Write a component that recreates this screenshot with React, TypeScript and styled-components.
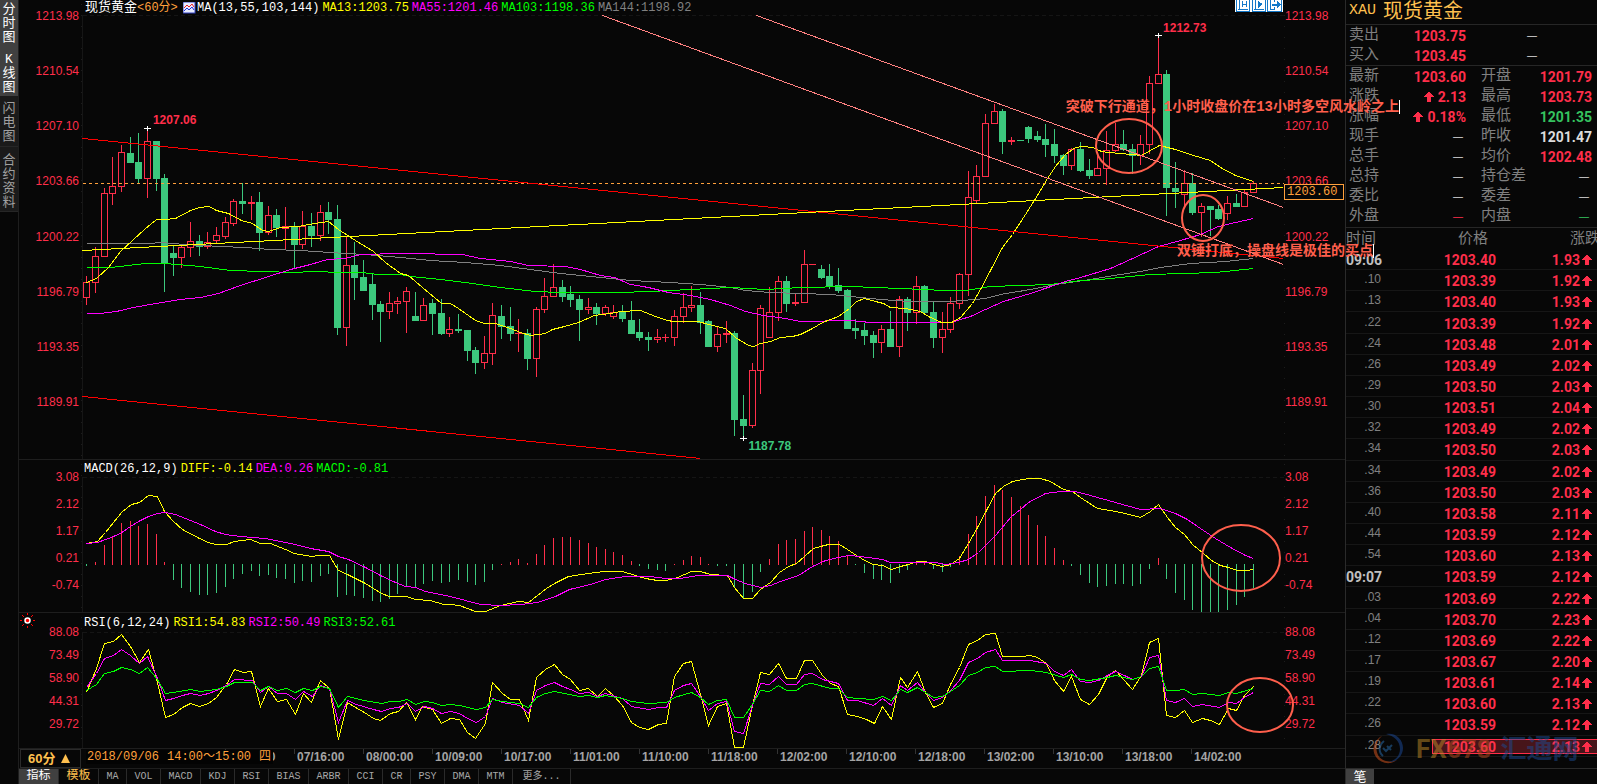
import React from "react";
import styled, { createGlobalStyle, css } from "styled-components";

const RED = "#ff2e4a";
const GREEN = "#3cc87d";
const GOLD = "#ffc04f";
const ORANGE = "#ffa03c";
const YELLOW = "#ffff00";
const MAGENTA = "#ff00ff";
const LIME = "#00ff00";
const GREY = "#808080";
const NOTE = "#ff5f4c";
const LINE = "#1e1e1e";

const SANS = `"Liberation Sans", "Noto Sans CJK SC", sans-serif`;
const MONO = `"Liberation Mono", "Noto Sans CJK SC", monospace`;
const NUM = `Roboto, "Noto Sans CJK SC", sans-serif`;

const GlobalStyle = createGlobalStyle`
  *, *::before, *::after { box-sizing: border-box; }
  body { margin: 0; background: #070707; overflow: hidden; }
  button { border: 0; margin: 0; padding: 0; background: none; font: inherit; color: inherit; cursor: pointer; }
  dl, dt, dd, h1, h2, p { margin: 0; font-weight: inherit; font-size: inherit; }
`;

/* ---------- data ---------- */

const PLOT_X = 82;
const PLOT_W = 1202;

type Candle = [up: 0 | 1, top: number, bottom: number, high: number, low: number];

const CANDLES: Candle[] = [
  [1, 282, 298, 276, 305], [1, 256, 283, 247, 293], [1, 193, 257, 188, 257], [1, 186, 194, 157, 205],
  [1, 152, 187, 145, 192], [0, 153, 163, 137, 163], [0, 162, 179, 133, 183], [1, 141, 179, 128, 198],
  [0, 141, 179, 141, 191], [0, 178, 264, 174, 292], [0, 253, 258, 246, 276], [1, 247, 258, 245, 268],
  [1, 241, 248, 222, 257], [0, 241, 247, 235, 256], [1, 242, 247, 232, 249], [1, 235, 241, 227, 244],
  [1, 222, 237, 217, 239], [1, 201, 224, 199, 226], [0, 201, 204, 183, 214], [1, 202, 204, 196, 220],
  [0, 202, 233, 192, 251], [1, 215, 233, 206, 235], [0, 215, 228, 209, 237], [1, 226, 229, 207, 249],
  [0, 227, 245, 222, 268], [1, 226, 245, 211, 249], [0, 226, 236, 213, 247], [1, 212, 236, 205, 241],
  [0, 212, 220, 202, 234], [0, 219, 328, 205, 335], [1, 265, 328, 237, 346], [0, 265, 278, 242, 300],
  [0, 277, 291, 260, 291], [0, 284, 305, 274, 320], [0, 304, 312, 301, 342], [1, 303, 312, 292, 319],
  [1, 301, 304, 297, 314], [1, 291, 302, 287, 333], [0, 316, 321, 292, 321], [1, 305, 321, 298, 321],
  [0, 303, 314, 299, 335], [0, 313, 334, 299, 335], [1, 329, 334, 317, 337], [0, 329, 331, 314, 333],
  [0, 330, 351, 330, 361], [0, 350, 363, 347, 374], [1, 353, 363, 336, 369], [1, 315, 354, 303, 365],
  [0, 316, 327, 305, 339], [0, 326, 334, 307, 341], [1, 333, 334, 319, 352], [0, 333, 359, 329, 370],
  [1, 309, 359, 307, 377], [1, 296, 310, 278, 313], [1, 287, 297, 264, 297], [0, 287, 297, 280, 302],
  [0, 294, 300, 286, 307], [0, 299, 310, 295, 341], [1, 307, 310, 298, 314], [0, 307, 314, 303, 325],
  [1, 307, 314, 305, 316], [1, 312, 317, 305, 319], [0, 311, 319, 305, 322], [0, 320, 334, 301, 334],
  [0, 332, 338, 319, 341], [0, 337, 340, 332, 351], [1, 337, 340, 329, 343], [1, 337, 338, 334, 342],
  [1, 316, 338, 310, 346], [1, 307, 317, 293, 323], [1, 305, 308, 286, 312], [0, 305, 323, 292, 334],
  [0, 321, 347, 320, 347], [1, 334, 347, 327, 352], [1, 333, 335, 321, 343], [0, 333, 420, 331, 436],
  [0, 419, 426, 395, 438], [1, 370, 426, 363, 428], [1, 308, 371, 305, 394], [1, 312, 338, 287, 338],
  [1, 281, 313, 276, 321], [0, 281, 304, 276, 312], [1, 302, 304, 294, 306], [1, 264, 303, 250, 303],
  [1, 264, 265, 264, 265], [0, 269, 278, 265, 279], [0, 276, 287, 264, 289], [0, 285, 291, 268, 293],
  [0, 290, 329, 289, 329], [0, 328, 331, 319, 339], [0, 330, 336, 323, 345], [0, 335, 343, 331, 358],
  [1, 329, 343, 325, 353], [0, 329, 347, 311, 347], [1, 299, 347, 296, 357], [0, 299, 313, 297, 331],
  [1, 286, 313, 276, 324], [0, 286, 313, 285, 313], [0, 312, 338, 301, 348], [1, 329, 338, 312, 353],
  [1, 303, 330, 297, 333], [1, 274, 304, 273, 309], [1, 197, 275, 171, 296], [1, 176, 201, 165, 203],
  [1, 123, 177, 114, 177], [1, 111, 124, 104, 124], [0, 111, 142, 109, 154], [1, 140, 142, 137, 145],
  [0, 140, 141, 140, 141], [0, 127, 139, 126, 143], [0, 136, 140, 131, 142], [0, 139, 145, 124, 157],
  [0, 144, 156, 129, 163], [0, 155, 166, 154, 175], [1, 149, 166, 148, 170], [0, 149, 171, 142, 172],
  [0, 170, 176, 159, 179], [1, 168, 176, 153, 176], [1, 150, 169, 131, 185], [1, 144, 151, 123, 152],
  [0, 144, 150, 130, 151], [0, 149, 156, 144, 174], [1, 144, 156, 135, 165], [1, 83, 145, 76, 154],
  [1, 74, 84, 35, 84], [0, 74, 188, 70, 216], [0, 188, 192, 162, 208], [1, 183, 195, 170, 208],
  [0, 183, 213, 173, 215], [1, 206, 213, 203, 237], [0, 206, 210, 206, 236], [0, 209, 219, 205, 220],
  [1, 203, 214, 196, 220], [0, 203, 207, 194, 207], [1, 192, 207, 190, 207], [1, 183, 193, 181, 193],
];

const MACD_BARS = [
  566, 562, 545, 536, 523, 521, 526, 524, 534, 562, 580, 588, 592, 595, 595, 593, 587, 579, 574, 571,
  576, 575, 578, 579, 583, 581, 582, 576, 574, 597, 595, 596, 598, 601, 602, 599, 594, 587, 587, 584,
  581, 583, 582, 580, 582, 585, 582, 570, 564, 562, 559, 563, 554, 545, 538, 537, 537, 540, 543, 547,
  549, 552, 555, 561, 566, 569, 570, 571, 564, 560, 556, 557, 564, 566, 566, 587, 598, 592, 572, 559,
  544, 540, 539, 531, 527, 530, 536, 541, 555, 565, 573, 579, 580, 583, 573, 570, 562, 563, 569, 572,
  567, 556, 534, 516, 496, 485, 490, 497, 506, 515, 525, 536, 548, 560, 566, 575, 583, 587, 586, 584,
  584, 586, 584, 569, 558, 579, 593, 600, 610, 612, 612, 612, 610, 605, 597, 588,
];

const MA13 =
  "86,282 96,278 108,267 120,251 132,240 144,229 156,219 164,219 175,218 190,210 199,207 209,206 216,210 228,213 241,220 252,223 262,230 268,231 280,227 298,226 314,223 328,221 338,229 355,240 373,251 385,262 400,273 408,275 422,287 441,303 450,303 458,308 475,320 484,323 495,323 510,328 520,332 530,335 545,333 552,329 564,326 578,322 594,315 610,313 620,311 640,310 655,316 667,320 673,321 698,321 708,324 725,328 735,337 748,345 753,346 760,343 770,341 780,337 792,336 800,334 812,328 822,322 838,316 849,308 856,301 864,298 875,301 883,303 890,307 905,308 920,311 928,316 941,322 951,322 960,317 972,303 980,289 990,270 1002,247 1012,234 1025,214 1037,195 1047,178 1055,166 1065,154 1075,147 1082,146 1092,147 1101,151 1108,152 1120,153 1131,154 1141,155 1150,150 1159,145 1175,149 1193,155 1210,160 1220,167 1235,175 1253,181";
const MA55 =
  "86,313 100,313 116,311 133,307 155,303 180,299 200,297 218,293 240,285 265,277 290,269 310,264 327,259 345,258 360,254 375,254 385,253 400,253 428,253 440,254 462,254 480,258 510,261 528,265 565,266 580,269 600,275 614,277 630,284 648,287 668,292 690,295 710,299 730,305 745,311 763,315 785,318 800,321 850,320 870,322 950,322 970,316 985,309 1003,301 1030,293 1065,281 1080,277 1110,268 1130,259 1158,246 1180,240 1200,234 1218,226 1235,222 1253,218";
const MA103 =
  "86,267 110,267 145,263 165,263 200,266 230,270 262,271 295,272 310,271 345,272 362,272 377,274 400,274 410,276 440,279 465,282 500,287 535,291 560,292 618,292 650,291 690,289 730,287 748,288 765,289 800,287 850,286 900,288 945,290 965,290 990,286 1050,284 1080,280 1100,279 1150,274 1215,272 1253,268";
const MA144 =
  "86,243 150,243 160,242 185,244 220,246 245,247 270,249 300,250 345,253 365,254 400,257 430,260 465,262 500,265 530,269 560,273 600,277 630,280 670,282 700,284 730,287 745,290 770,292 800,293 830,294 850,296 880,299 910,301 950,301 985,298 1000,294 1030,289 1055,284 1090,279 1120,274 1140,271 1160,267 1190,263 1225,261 1253,258";
const DIFF =
  "86,543 97,541 105,532 113,522 122,511 131,504 139,502 148,495 157,496 164,511 173,521 182,529 199,538 208,542 215,544 226,544 234,541 250,539 260,543 270,543 285,549 294,553 311,556 319,555 329,555 338,570 347,574 365,583 381,593 389,596 406,596 415,599 430,600 443,604 450,604 459,605 475,611 485,611 500,605 518,601 528,602 537,595 546,588 554,583 568,576 588,573 603,571 622,571 635,575 645,578 657,580 666,580 677,577 691,571 700,571 710,574 727,575 734,587 743,598 752,598 760,589 770,582 779,572 788,566 796,563 804,556 813,548 820,546 828,544 839,544 847,549 856,555 866,561 873,564 882,565 891,569 900,566 908,564 917,561 925,561 933,564 942,566 950,564 959,558 968,543 977,527 986,510 995,493 1003,486 1012,481 1022,479 1030,478 1040,478 1050,481 1063,489 1072,491 1080,497 1097,508 1110,510 1125,513 1140,517 1150,511 1158,504 1167,517 1175,527 1184,534 1193,545 1202,552 1211,560 1220,565 1228,567 1237,570 1246,570 1253,569";
const DEA =
  "86,543 97,542 108,538 120,533 130,526 140,520 148,516 157,513 165,512 175,514 185,518 200,524 215,531 225,534 240,536 265,538 280,541 295,544 310,548 328,551 338,556 348,559 365,567 380,575 395,582 405,586 415,587 425,591 440,594 450,596 465,600 480,604 500,605 520,604 537,602 555,596 569,589 590,584 605,579 625,576 650,576 665,578 680,578 697,575 727,575 735,579 745,583 760,587 770,585 780,581 798,575 812,566 825,560 838,557 848,555 860,556 882,559 890,562 900,562 935,562 945,564 958,562 968,559 978,552 995,535 1011,516 1020,509 1028,502 1045,493 1060,491 1075,491 1090,495 1115,502 1140,509 1160,508 1175,513 1187,519 1200,528 1215,538 1230,547 1245,555 1253,558";
const RSI1 =
  "86,692 96,668 104,643 113,641 121,634 130,646 139,662 148,649 157,682 165,717 173,714 182,707 190,703 199,706 208,703 216,697 226,684 234,669 243,672 251,671 260,706 268,688 277,701 286,699 295,714 303,693 311,702 320,680 329,688 338,739 347,702 355,707 364,712 373,718 380,720 390,713 398,711 406,702 415,719 422,706 432,709 441,723 450,718 459,719 467,732 475,738 485,723 492,682 502,693 510,699 519,699 528,720 536,677 545,669 554,664 562,674 570,679 579,690 588,688 597,696 605,688 614,696 622,705 631,722 639,727 648,729 658,724 666,723 674,676 683,663 691,661 700,694 708,725 717,706 726,703 734,747 743,747 752,705 760,672 769,674 778,663 786,678 796,678 804,660 812,660 822,675 830,683 838,686 847,714 857,716 866,719 874,723 882,706 891,719 900,677 907,687 917,671 925,692 933,707 942,703 950,684 959,667 968,644 977,640 985,634 995,633 1002,656 1022,656 1030,655 1037,657 1046,663 1054,680 1063,691 1071,676 1080,699 1089,704 1098,694 1107,676 1115,670 1124,680 1132,689 1141,675 1149,642 1158,638 1166,715 1175,717 1184,710 1192,722 1202,718 1210,720 1219,724 1228,708 1236,710 1244,695 1253,686";
const RSI2 =
  "86,687 96,673 104,658 113,655 121,649 130,655 139,663 147,656 157,678 165,700 173,698 182,695 190,693 200,695 208,693 216,690 226,685 234,679 252,680 260,692 268,686 277,693 286,693 295,699 303,691 312,696 320,685 329,688 338,722 347,700 356,704 373,709 381,711 390,708 398,707 407,703 415,711 424,706 432,708 441,713 450,711 459,713 467,718 476,722 485,716 492,698 502,702 519,705 528,713 536,690 545,685 554,682 562,686 570,689 579,693 588,692 597,696 605,693 622,698 631,706 648,709 658,707 666,707 674,690 683,685 691,683 700,696 708,710 717,703 726,701 734,731 743,733 752,705 760,683 769,684 778,676 786,684 796,684 804,674 812,673 822,679 838,683 847,700 857,700 873,705 882,698 891,705 900,685 907,690 917,682 925,692 933,700 942,697 950,690 959,680 968,662 977,658 985,652 995,649 1002,660 1030,660 1046,663 1054,671 1063,675 1071,669 1080,681 1089,682 1098,680 1107,675 1115,671 1124,675 1132,679 1141,676 1149,657 1158,655 1166,700 1175,702 1184,698 1192,706 1202,704 1219,707 1228,702 1236,703 1244,697 1253,692";
const RSI3 =
  "86,690 96,684 104,673 113,671 121,667 130,669 139,673 147,667 157,679 165,693 173,692 190,689 200,691 216,689 226,686 234,682 252,682 260,690 268,686 277,690 286,688 295,692 303,688 312,690 320,686 329,688 338,707 347,696 364,700 381,703 390,701 398,701 407,699 415,704 424,701 432,702 441,705 450,704 459,705 476,709 485,707 492,699 502,701 519,703 528,707 536,697 545,693 554,691 579,696 588,695 597,697 605,695 622,698 631,701 648,703 666,702 674,697 691,692 700,697 708,704 717,700 726,699 734,717 743,717 752,704 760,690 769,691 778,685 786,690 796,690 804,684 812,683 830,688 838,688 847,697 857,698 873,699 882,696 891,700 900,689 907,692 917,687 925,692 933,697 942,696 950,691 959,685 968,675 977,672 985,667 995,666 1002,671 1030,670 1046,672 1063,677 1071,674 1080,679 1089,680 1107,677 1115,675 1132,679 1141,676 1149,668 1158,666 1166,690 1175,690 1184,689 1192,694 1202,693 1219,695 1228,692 1236,693 1253,688";

const PRICE_SCALE = ["1213.98", "1210.54", "1207.10", "1203.66", "1200.22", "1196.79", "1193.35", "1189.91"];
const MACD_SCALE = ["3.08", "2.12", "1.17", "0.21", "-0.74"];
const RSI_SCALE = ["88.08", "73.49", "58.90", "44.31", "29.72"];

const TIMES = [
  "07/08:00", "07/16:00", "08/00:00", "10/09:00", "10/17:00", "11/01:00", "11/10:00", "11/18:00",
  "12/02:00", "12/10:00", "12/18:00", "13/02:00", "13/10:00", "13/18:00", "14/02:00",
];

const INDICATORS = ["MA", "VOL", "MACD", "KDJ", "RSI", "BIAS", "ARBR", "CCI", "CR", "PSY", "DMA", "MTM"];

type Tone = "up" | "down" | "flat";
const QUOTES: { label: string; value: string; tone?: Tone; arrow?: boolean }[] = [
  { label: "最新", value: "1203.60", tone: "up" },
  { label: "开盘", value: "1201.79", tone: "up" },
  { label: "涨跌", value: "2.13", tone: "up", arrow: true },
  { label: "最高", value: "1203.73", tone: "up" },
  { label: "涨幅", value: "0.18%", tone: "up", arrow: true },
  { label: "最低", value: "1201.35", tone: "down" },
  { label: "现手", value: "—" },
  { label: "昨收", value: "1201.47" },
  { label: "总手", value: "—" },
  { label: "均价", value: "1202.48", tone: "up" },
  { label: "总持", value: "—" },
  { label: "持仓差", value: "—" },
  { label: "委比", value: "—" },
  { label: "委差", value: "—" },
  { label: "外盘", value: "—", tone: "up" },
  { label: "内盘", value: "—", tone: "down" },
];

const TICKS: [string, string, string][] = [
  ["09:06", "1203.40", "1.93"], [".10", "1203.39", "1.92"], [".13", "1203.40", "1.93"], [".22", "1203.39", "1.92"],
  [".24", "1203.48", "2.01"], [".26", "1203.49", "2.02"], [".29", "1203.50", "2.03"], [".30", "1203.51", "2.04"],
  [".32", "1203.49", "2.02"], [".34", "1203.50", "2.03"], [".34", "1203.49", "2.02"], [".36", "1203.50", "2.03"],
  [".40", "1203.58", "2.11"], [".44", "1203.59", "2.12"], [".54", "1203.60", "2.13"], ["09:07", "1203.59", "2.12"],
  [".03", "1203.69", "2.22"], [".04", "1203.70", "2.23"], [".12", "1203.69", "2.22"], [".17", "1203.67", "2.20"],
  [".19", "1203.61", "2.14"], [".22", "1203.60", "2.13"], [".26", "1203.59", "2.12"], [".28", "1203.60", "2.13"],
];

/* ---------- styled parts ---------- */

const Screen = styled.div`
  display: flex;
  height: 100vh;
  min-height: 600px;
  overflow: hidden;
  background: #070707;
  color: #fff;
  font-family: ${SANS};
  font-size: 12px;
`;

const SideNav = styled.nav`
  flex: none;
  width: 19px;
  display: flex;
  flex-direction: column;
  border-right: 1px solid ${LINE};
`;

const SideTab = styled.button<{ $on?: boolean; $top: number; $bottom: number }>`
  width: 18px;
  padding: ${(p) => p.$top}px 2px ${(p) => p.$bottom}px;
  border-bottom: 1px solid ${(p) => (p.$on ? "#404040" : "#262626")};
  background: ${(p) => (p.$on ? "#404040" : "#1a1a1a")};
  color: ${(p) => (p.$on ? "#fff" : "#a0a0a0")};
  font: 13px/14px ${MONO};
  word-break: break-all;
  text-align: center;
`;

const Workspace = styled.main`
  flex: 1;
  min-width: 0;
  display: flex;
  flex-direction: column;
`;

const Pane = styled.section<{ $grow: number }>`
  position: relative;
  flex: ${(p) => p.$grow} 1 0;
  min-height: 0;
  display: grid;
  grid-template-columns: 63px minmax(0, 1fr) 61px;
  border-bottom: 1px solid ${LINE};
`;

const Scale = styled.div<{ $left?: boolean; $top: number; $bottom: number }>`
  display: flex;
  flex-direction: column;
  justify-content: space-between;
  min-height: 0;
  padding: ${(p) => p.$top}px 3px ${(p) => p.$bottom}px 1px;
  color: ${RED};
  font: 12px/16px ${SANS};
  text-align: ${(p) => (p.$left ? "right" : "left")};
  background: repeating-linear-gradient(#1c1c1c 0 1px, transparent 1px 11px)
    ${(p) => (p.$left ? "right" : "left")} 4px / 1px 100% no-repeat;
`;

const PlotColumn = styled.div`
  display: flex;
  flex-direction: column;
  min-width: 0;
  min-height: 0;
`;

const PlotTitle = styled.header<{ $h: number }>`
  flex: none;
  height: ${(p) => p.$h}px;
  display: flex;
  align-items: center;
  gap: 3px;
  padding-left: 2px;
  font: 12px/12px ${MONO};
  white-space: nowrap;
`;

const Series = styled.span<{ $c?: string }>`
  color: ${(p) => p.$c ?? "#fff"};
  font-size: 12px;
`;

const Instrument = styled.h2`
  display: flex;
  width: 94px;
  font-size: 13px;
  padding-left: 1px;
`;

const TinyIcon = styled.svg`
  flex: none;
  width: 13px;
  height: 12px;
  margin-left: 2px;
  margin-right: -2px;
`;

const ToolGroup = styled.div`
  display: flex;
  align-self: flex-start;
  margin-left: auto;
  margin-right: 1px;
`;

const ToolButton = styled.button`
  width: 16px;
  height: 12px;
  overflow: hidden;
  background: #fff;
  svg {
    display: block;
  }
`;

const PlotArea = styled.div`
  position: relative;
  flex: 1;
  min-height: 0;
  border-left: 1px solid #161616;
`;

const Plot = styled.svg`
  position: absolute;
  top: 0;
  left: -1px;
  width: calc(100% + 1px);
  height: 100%;
`;

const PeakLabel = styled.span<{ $c: string }>`
  position: absolute;
  color: ${(p) => p.$c};
  font: bold 12px/14px ${SANS};
`;

const PriceTag = styled.output`
  position: absolute;
  right: 1px;
  top: 40%;
  width: 60px;
  height: 16px;
  border: 1px solid ${ORANGE};
  background: #070707;
  color: ${ORANGE};
  padding-left: 2px;
  font: 12px/14px ${MONO};
`;

const Note = styled.p<{ $top: number; $right: number }>`
  position: absolute;
  z-index: 3;
  top: ${(p) => p.$top}px;
  right: ${(p) => p.$right}px;
  border-right: 1px solid #fff;
  color: ${NOTE};
  font: bold 14px/14px ${MONO};
  white-space: nowrap;
`;

const AlertIcon = styled.svg`
  position: absolute;
  top: 0;
  left: 1px;
  width: 15px;
  height: 15px;
`;

const TimeBar = styled.div`
  flex: none;
  height: 20px;
  display: grid;
  grid-template-columns: 63px minmax(0, 1fr) 61px;
  border-bottom: 1px solid ${LINE};
`;

const PeriodButton = styled.button`
  display: flex;
  align-items: center;
  gap: 6px;
  margin: 0 1px;
  padding-left: 7px;
  border: 1px solid #2a2a2a;
  color: ${GOLD};
  font: bold 13px/16px ${SANS};
`;

const TimeAxis = styled.div`
  position: relative;
  display: grid;
  grid-template-columns: 143fr repeat(15, 69fr) 24fr;
`;

const TimeLabel = styled.span`
  padding-left: 3px;
  color: #a4a4a4;
  font: bold 12px/16px ${SANS};
  background: linear-gradient(#333, #333) left top / 1px 5px no-repeat;
`;

const TimeCursor = styled.output`
  position: absolute;
  left: 4px;
  top: 1px;
  width: 187px;
  height: 14px;
  display: flex;
  gap: 8px;
  padding-left: 1px;
  background: #030303;
  color: ${ORANGE};
  font: 12px/14px ${MONO};
  white-space: nowrap;
`;

const TabBar = styled.nav`
  flex: none;
  height: 15px;
  display: flex;
`;

const Tab = styled.button<{ $w: number; $kind?: "active" | "gold" }>`
  flex: none;
  width: ${(p) => p.$w}px;
  border-right: 1px solid #2a2a2a;
  color: #a8a8a8;
  font: 10px/15px ${MONO};
  overflow: hidden;
  ${(p) =>
    p.$kind &&
    css`
      color: ${p.$kind === "gold" ? GOLD : "#fff"};
      background: ${p.$kind === "active" ? "#404040" : "none"};
      font-size: 12px;
    `}
`;

const QuotePanel = styled.aside`
  position: relative;
  flex: none;
  width: 252px;
  display: flex;
  flex-direction: column;
  overflow: hidden;
  border-left: 1px solid #2a2a2a;
`;

const PanelTitle = styled.h1`
  flex: none;
  height: 25px;
  display: flex;
  align-items: center;
  gap: 7px;
  padding: 0 0 3px 3px;
  border-bottom: 1px solid #262626;
  color: ${GOLD};
  font: 20px/20px ${SANS};
`;

const Ticker = styled.span`
  font: 15px/20px ${MONO};
`;

const QuoteGrid = styled.dl<{ $bottom: number }>`
  flex: none;
  display: grid;
  grid-template-columns: 40px 77px 55px 1fr;
  grid-auto-rows: 20px;
  padding: 0 5px ${(p) => p.$bottom}px 3px;
  border-bottom: 1px solid #262626;
`;

const QuoteLabel = styled.dt<{ $second?: boolean }>`
  padding-left: ${(p) => (p.$second ? 15 : 0)}px;
  color: ${GREY};
  font: 15px/18px ${SANS};
  white-space: nowrap;
`;

const toneColor = (t?: Tone) => (t === "up" ? RED : t === "down" ? "#35c35f" : "#dcdcdc");

const QuoteValue = styled.dd<{ $tone?: Tone; $dash?: boolean; $wide?: boolean }>`
  display: flex;
  align-items: center;
  justify-content: flex-end;
  gap: 4px;
  padding-top: 1px;
  padding-right: ${(p) => (p.$wide ? 55 : p.$dash ? 3 : 0)}px;
  color: ${(p) => toneColor(p.$tone)};
  font: ${(p) => (p.$dash ? `10px/16px ${SANS}` : `bold 14px/16px ${NUM}`)};
  ${(p) => p.$wide && "grid-column: 3 / 5;"}
  svg {
    flex: none;
  }
`;

const TickTable = styled.table`
  flex: none;
  height: 529px;
  width: 100%;
  table-layout: fixed;
  border-collapse: collapse;
  th {
    height: 21px;
    padding: 0 13px 2px 0;
    color: ${GREY};
    font: 15px/17px ${SANS};
    text-align: right;
    white-space: nowrap;
  }
  th:first-child {
    text-align: left;
  }
  th:last-child {
    padding: 0 0 2px 69px;
    text-align: left;
  }
  td {
    position: relative;
    padding: 2px 5px 0 0;
    border-bottom: 1px solid #161616;
    color: ${RED};
    font: bold 14px/16px ${NUM};
    text-align: right;
    white-space: nowrap;
  }
`;

const TickTime = styled.td<{ $minute: boolean }>`
  && {
    padding: ${(p) => (p.$minute ? 2 : 0)}px 51px ${(p) => (p.$minute ? 0 : 2)}px 0;
    color: ${(p) => (p.$minute ? "#c0c0c0" : GREY)};
    font: ${(p) => (p.$minute ? `bold 14px/14px ${NUM}` : `12px/14px ${SANS}`)};
  }
`;

const Change = styled.span`
  display: inline-flex;
  align-items: center;
  gap: 2px;
  svg {
    flex: none;
  }
`;

const ActiveMark = styled.span`
  position: absolute;
  left: 0;
  top: 3px;
  bottom: 2px;
  width: 166px;
  border: 1px solid ${RED};
  background: rgba(255, 60, 80, 0.26);
`;

const Watermark = styled.div`
  position: absolute;
  left: 26px;
  bottom: 19px;
  display: flex;
  align-items: center;
  font: bold 26px/32px ${NUM};
  opacity: 0.5;
  svg {
    width: 32px;
    height: 32px;
    margin-right: 12px;
  }
`;

const Brand = styled.span<{ $c: string }>`
  color: ${(p) => p.$c};
  &:last-child {
    margin-left: 9px;
  }
`;

const PanelFooter = styled.footer`
  flex: none;
  height: 16px;
  margin-top: auto;
  border-top: 1px solid #2a2a2a;
  display: flex;
`;

const FooterTab = styled.button`
  width: 28px;
  background: #404040;
  font: 13px/15px ${SANS};
`;

/* ---------- drawings ---------- */

const candleX = (i: number) => Math.floor(86.9 + i * 8.64);

function UpArrow() {
  return (
    <svg width="10" height="10" viewBox="0 0 10 10" shapeRendering="crispEdges" aria-hidden="true">
      <path d="M4 0h2v1h1v1h1v1h1v1h1v1H7v5H3V5H0V4h1V3h1V2h1V1h1z" fill={RED} />
    </svg>
  );
}

function Candles() {
  return (
    <g shapeRendering="crispEdges">
      {CANDLES.map(([up, top, bottom, high, low], i) => {
        const x = candleX(i);
        const h = Math.max(bottom - top, 1);
        return up ? (
          <g key={i} fill={RED}>
            {high < top && <rect x={x} y={high} width={1} height={top - high} />}
            {low > bottom && <rect x={x} y={bottom} width={1} height={low - bottom} />}
            {h < 3 ? (
              <rect x={x - 3} y={top} width={7} height={h} />
            ) : (
              <rect x={x - 2.5} y={top + 0.5} width={6} height={h - 1} fill="#070707" stroke={RED} />
            )}
          </g>
        ) : (
          <g key={i} fill={GREEN}>
            <rect x={x} y={high} width={1} height={Math.max(low - high, 1)} />
            <rect x={x - 3} y={top} width={7} height={h} />
          </g>
        );
      })}
    </g>
  );
}

function Curve({ pts, c }: { pts: string; c: string }) {
  return (
    <polyline
      points={pts}
      fill="none"
      stroke={c}
      transform="translate(0.5 0.5)"
      shapeRendering="crispEdges"
      vectorEffect="non-scaling-stroke"
    />
  );
}

function Ring({ cx, cy, rx, ry }: { cx: number; cy: number; rx: number; ry: number }) {
  return <ellipse cx={cx} cy={cy} rx={rx} ry={ry} fill="none" stroke={NOTE} strokeWidth={2} />;
}

function TopRule({ y }: { y: number }) {
  return <line x1={83} x2={1284} y1={y + 0.5} y2={y + 0.5} stroke="#151515" strokeDasharray="4 3" />;
}

function Cross({ x, y }: { x: number; y: number }) {
  return <path d={`M${x - 3} ${y + 0.5}h7M${x + 0.5} ${y - 2}v5`} stroke="#fff" shapeRendering="crispEdges" />;
}

function MacdBars() {
  return (
    <g shapeRendering="crispEdges">
      {MACD_BARS.map((y, i) => (
        <rect
          key={i}
          x={candleX(i)}
          y={y < 565 ? y : 564}
          width={1}
          height={y < 565 ? 565 - y : y - 564}
          fill={y < 565 ? RED : GREEN}
        />
      ))}
    </g>
  );
}

function ScaleColumn({ values, left, top, bottom }: { values: string[]; left?: boolean; top: number; bottom: number }) {
  return (
    <Scale $left={left} $top={top} $bottom={bottom}>
      {values.map((v) => (
        <span key={v}>{v}</span>
      ))}
    </Scale>
  );
}

const peakAt = (x: number, y: number): React.CSSProperties => ({
  left: `${((x - PLOT_X) / PLOT_W) * 100}%`,
  top: `${((y - 15) / 444) * 100}%`,
});

/* ---------- page ---------- */

export default function App() {
  return (
    <>
      <GlobalStyle />
      <Screen>
        <SideNav aria-label="视图">
          <SideTab $on $top={3} $bottom={2}>分时图</SideTab>
          <SideTab $on $top={5} $bottom={0}>K线图</SideTab>
          <SideTab $top={6} $bottom={2}>闪电图</SideTab>
          <SideTab $top={7} $bottom={1}>合约资料</SideTab>
        </SideNav>

        <Workspace>
          <Pane $grow={459} aria-label="价格">
            <ScaleColumn left values={PRICE_SCALE} top={8} bottom={49} />
            <PlotColumn>
              <PlotTitle $h={15}>
                <Instrument>
                  现货黄金<Series $c={ORANGE}>&lt;60分&gt;</Series>
                </Instrument>
                <TinyIcon viewBox="0 0 13 12" aria-hidden="true">
                  <rect width="12" height="11" fill="#e8ecff" stroke="#3040c0" />
                  <path d="M1 6l3-3 2 2 3-3 2 3" fill="none" stroke="#f02020" />
                  <path d="M1 9l3-3 2 2 3-3 2 3" fill="none" stroke="#2030e0" />
                </TinyIcon>
                <Series>MA(13,55,103,144)</Series>
                <Series $c={YELLOW}>MA13:1203.75</Series>
                <Series $c={MAGENTA}>MA55:1201.46</Series>
                <Series $c={LIME}>MA103:1198.36</Series>
                <Series $c={GREY}>MA144:1198.92</Series>
                <ToolGroup>
                  <ToolButton aria-label="区间">
                    <svg width="16" height="12" viewBox="0 0 16 12" fill="none" stroke="#1478c8" shapeRendering="crispEdges">
                      <path d="M1.5 0v11.5h13V0M4.5 0v9M3 9.5h10M7.5 1v6M11.5 1v6M8 4.5h3" />
                    </svg>
                  </ToolButton>
                  <ToolButton aria-label="播放">
                    <svg width="16" height="12" viewBox="0 0 16 12" fill="none" stroke="#1478c8" shapeRendering="crispEdges">
                      <path d="M1.5 0v11.5h13V0M4.5 0v9M3 9.5h10" />
                      <path d="M7 1l5 3-5 4z" fill="#1478c8" stroke="none" />
                    </svg>
                  </ToolButton>
                  <ToolButton aria-label="右移">
                    <svg width="16" height="12" viewBox="0 0 16 12" fill="none" stroke="#1478c8" shapeRendering="crispEdges">
                      <path d="M.5 0v11.5h14V0M7.5 0v2M7.5 7v2.5h-4V0" />
                      <path d="M5 4h5V1l4 3.5-4 4V6H5z" fill="#1478c8" stroke="none" />
                    </svg>
                  </ToolButton>
                </ToolGroup>
              </PlotTitle>
              <PlotArea>
                <Plot viewBox="82 15 1202 444" preserveAspectRatio="none" role="img" aria-label="K线图">
                  <TopRule y={15} />
                  <Candles />
                  <Curve pts={MA144} c={GREY} />
                  <Curve pts={MA103} c={LIME} />
                  <Curve pts={MA55} c={MAGENTA} />
                  <Curve pts={MA13} c={YELLOW} />
                  <line x1={83} x2={1284} y1={183.5} y2={183.5} stroke={ORANGE} strokeDasharray="3 3" shapeRendering="crispEdges" />
                  <Curve pts="82,138 1283,258" c="#ff0000" />
                  <Curve pts="82,396 700,458" c="#ff0000" />
                  <Curve pts="82,250 1283,187" c={YELLOW} />
                  <Curve pts="602,15 1283,264" c="#ff8080" />
                  <Curve pts="756,15 1283,207" c="#ff8080" />
                  <Cross x={147} y={128} />
                  <Cross x={1158} y={35} />
                  <Cross x={743} y={438} />
                  <Ring cx={1129} cy={146} rx={33} ry={27} />
                  <Ring cx={1203} cy={218} rx={21} ry={23} />
                </Plot>
                <PeakLabel $c={RED} style={peakAt(152, 113)}>1207.06</PeakLabel>
                <PeakLabel $c={RED} style={peakAt(1163, 21)}>1212.73</PeakLabel>
                <PeakLabel $c={GREEN} style={peakAt(748, 439)}>1187.78</PeakLabel>
              </PlotArea>
            </PlotColumn>
            <ScaleColumn values={PRICE_SCALE} top={8} bottom={49} />
            <PriceTag>1203.60</PriceTag>
            <Note $top={100} $right={-55}>突破下行通道，1小时收盘价在13小时多空风水岭之上</Note>
            <Note $top={244} $right={-29}>双锤打底，操盘线是极佳的买点</Note>
          </Pane>

          <Pane $grow={152} aria-label="MACD">
            <ScaleColumn left values={MACD_SCALE} top={9} bottom={19} />
            <PlotColumn>
              <PlotTitle $h={17}>
                <Series>MACD(26,12,9)</Series>
                <Series $c={YELLOW}>DIFF:-0.14</Series>
                <Series $c={MAGENTA}>DEA:0.26</Series>
                <Series $c={LIME}>MACD:-0.81</Series>
              </PlotTitle>
              <PlotArea>
                <Plot viewBox="82 477 1202 135" preserveAspectRatio="none" role="img" aria-label="MACD 指标" overflow="visible">
                  <TopRule y={477} />
                  <MacdBars />
                  <Curve pts={DIFF} c={YELLOW} />
                  <Curve pts={DEA} c={MAGENTA} />
                  <Ring cx={1241} cy={558} rx={39} ry={33} />
                </Plot>
              </PlotArea>
            </PlotColumn>
            <ScaleColumn values={MACD_SCALE} top={9} bottom={19} />
          </Pane>

          <Pane $grow={135} aria-label="RSI">
            <ScaleColumn left values={RSI_SCALE} top={11} bottom={16} />
            <PlotColumn>
              <PlotTitle $h={19}>
                <Series>RSI(6,12,24)</Series>
                <Series $c={YELLOW}>RSI1:54.83</Series>
                <Series $c={MAGENTA}>RSI2:50.49</Series>
                <Series $c={LIME}>RSI3:52.61</Series>
              </PlotTitle>
              <PlotArea>
                <Plot viewBox="82 632 1202 116" preserveAspectRatio="none" role="img" aria-label="RSI 指标" overflow="visible">
                  <TopRule y={632} />
                  <Curve pts={RSI1} c={YELLOW} />
                  <Curve pts={RSI2} c={MAGENTA} />
                  <Curve pts={RSI3} c={LIME} />
                  <Ring cx={1260} cy={705} rx={33} ry={27} />
                </Plot>
              </PlotArea>
            </PlotColumn>
            <ScaleColumn values={RSI_SCALE} top={11} bottom={16} />
            <AlertIcon viewBox="0 0 15 15" aria-hidden="true">
              <path
                d="M7.5 0v2M7.5 13v2M0 7.500h2M13 7.500h2M2 2l2 2M13 2l-2 2M2 13l2-2M13 13l-2-2"
                stroke="#f00"
                strokeWidth="1"
              />
              <circle cx="7.500" cy="7.500" r="2.500" fill="#f00" stroke="#fff" strokeWidth="1.500" />
            </AlertIcon>
          </Pane>

          <TimeBar>
            <PeriodButton>
              <span>60分</span>
              <svg width="9" height="9" viewBox="0 0 9 9" aria-hidden="true">
                <path d="M4.500 0L9 9H0z" fill={GOLD} />
              </svg>
            </PeriodButton>
            <TimeAxis>
              <span />
              {TIMES.map((t) => (
                <TimeLabel key={t}>{t}</TimeLabel>
              ))}
              <TimeCursor>
                <span>2018/09/06</span>
                <span>14:00～15:00</span>
                <span>四</span>
              </TimeCursor>
            </TimeAxis>
          </TimeBar>

          <TabBar aria-label="指标">
            <Tab $w={40} $kind="active">指标</Tab>
            <Tab $w={40} $kind="gold">模板</Tab>
            {INDICATORS.map((name) => (
              <Tab key={name} $w={name.length * 6 + 16}>{name}</Tab>
            ))}
            <Tab $w={58}>更多...</Tab>
          </TabBar>
        </Workspace>

        <QuotePanel>
          <PanelTitle>
            <Ticker>XAU</Ticker>现货黄金
          </PanelTitle>
          <QuoteGrid $bottom={0}>
            <QuoteLabel>卖出</QuoteLabel>
            <QuoteValue $tone="up">1203.75</QuoteValue>
            <QuoteValue $dash $wide>—</QuoteValue>
            <QuoteLabel>买入</QuoteLabel>
            <QuoteValue $tone="up">1203.45</QuoteValue>
            <QuoteValue $dash $wide>—</QuoteValue>
          </QuoteGrid>
          <QuoteGrid $bottom={1}>
            {QUOTES.map((q, i) => (
              <React.Fragment key={q.label}>
                <QuoteLabel $second={i % 2 === 1}>{q.label}</QuoteLabel>
                <QuoteValue $tone={q.tone} $dash={q.value === "—"}>
                  {q.arrow && <UpArrow />}
                  {q.value}
                </QuoteValue>
              </React.Fragment>
            ))}
          </QuoteGrid>

          <TickTable>
            <colgroup>
              <col width="86" />
              <col width="69" />
              <col />
            </colgroup>
            <thead>
              <tr>
                <th scope="col">时间</th>
                <th scope="col">价格</th>
                <th scope="col">涨跌</th>
              </tr>
            </thead>
            <tbody>
              {TICKS.map(([time, price, change], i) => (
                <tr key={i}>
                  <TickTime $minute={time.length > 3}>{time}</TickTime>
                  <td>
                    {i === TICKS.length - 1 && <ActiveMark />}
                    {price}
                  </td>
                  <td>
                    <Change>
                      {change}
                      <UpArrow />
                    </Change>
                  </td>
                </tr>
              ))}
            </tbody>
          </TickTable>

          <Watermark>
            <svg viewBox="0 0 32 32" fill="none" aria-hidden="true">
              <path d="M10 3C2 7-1 17 4 24c5 7 15 8 21 3-8 3-16 1-19-5C3 15 4 8 10 3z" fill="#e05a20" />
              <path d="M14 1c9-2 17 5 17 14 0 8-7 15-15 14 7-1 12-6 12-13 0-8-6-13-14-15z" fill="#1c4c9c" />
              <path d="M12 8c-5 4-6 11-1 15M20 12l-6 6-3-3M15 13l4 4" stroke="#2a70b0" strokeWidth="2" />
            </svg>
            <Brand $c="#c08a28">FX</Brand>
            <Brand $c="#b84c20">678</Brand>
            <Brand $c="#1c4c94">汇通网</Brand>
          </Watermark>

          <PanelFooter>
            <FooterTab>笔</FooterTab>
          </PanelFooter>
        </QuotePanel>
      </Screen>
    </>
  );
}
